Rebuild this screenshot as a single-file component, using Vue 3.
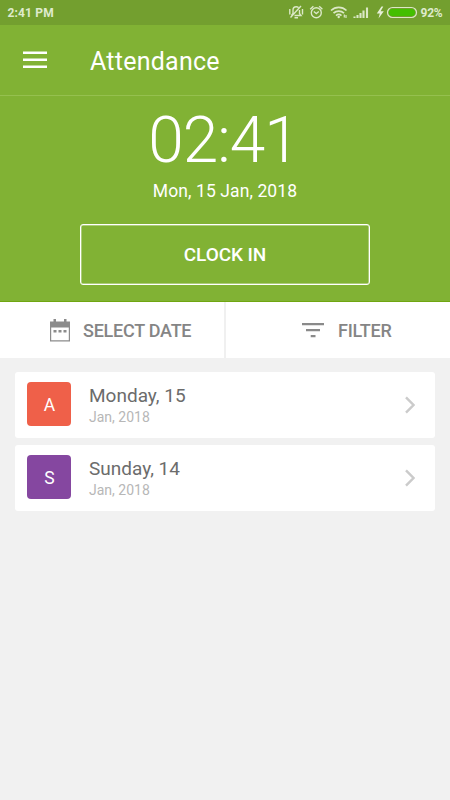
<script setup>
const entries = [
  { letter: 'A', day: 'Monday, 15', month: 'Jan, 2018', tone: 'coral' },
  { letter: 'S', day: 'Sunday, 14', month: 'Jan, 2018', tone: 'purple' },
]
</script>

<template>
  <div class="screen">
    <div class="status">
      <span class="status-time">2:41 PM</span>
      <svg class="status-icons" width="139" height="25" viewBox="0 0 139 25" fill="none" stroke="#dbe8c6" stroke-width="1.4">
        <path d="M3.500 15.500L5 13.500V10c0-2 1.300-3.300 3.200-3.300 1 0 1.700.3 2.300.8M11.500 10v3.500l1.500 2H6.500M6.500 17.800H10M13 6L2.500 17.500M1.800 9v5.500M14.500 9v5.500" />
        <circle cx="28.300" cy="12.800" r="5" />
        <path d="M25.800 11.500l2.500 2 2.500-2M22.200 9.200l3.200-3M34.400 9.200l-3.200-3" />
        <path d="M43 10.500c4.500-4.300 11-4.300 15.500 0M45.500 13.200c3-2.800 7.500-2.800 10.500 0M48 15.700c1.700-1.500 3.800-1.500 5.500 0" stroke-width="1.700" />
        <circle cx="50.700" cy="17" r="1.200" fill="#dbe8c6" stroke="none" />
        <path d="M56.300 14.500v3M58 18v-3" stroke-width="1.200" />
        <path d="M66.500 16.500v1.500M69.500 15v3M72.500 13v5M75.500 10.500v7.500M79 7.500v10.500" stroke-width="2.100" />
        <path d="M93.500 6.500l-4.700 7h3l-1.300 5 5.300-7.200h-3.200l2.700-4.800z" fill="#e7f0d9" stroke="none" />
        <rect x="99.500" y="7.500" width="29" height="10" rx="5" stroke="#dbe8c6" stroke-width="1.200" />
        <rect x="101" y="9" width="26" height="7" rx="3.500" fill="#43bf00" stroke="none" />
      </svg>
      <span class="status-pct">92%</span>
    </div>

    <header class="bar">
      <svg width="24" height="18" viewBox="0 0 24 18" fill="#fff">
        <path d="M0 .500h24v2.500H0zM0 7.500h24V10H0zM0 14.500h24V17H0z" />
      </svg>
      <h1 class="title">Attendance</h1>
    </header>

    <section class="hero">
      <div class="clock">02:41</div>
      <div class="date">Mon, 15 Jan, 2018</div>
      <button class="clock-in"><span>CLOCK IN</span></button>
    </section>

    <nav class="tools">
      <button class="tool select">
        <svg width="20" height="24" viewBox="0 0 20 24">
          <path d="M0 3.500h3.500V1H6v2.500h8V1h2.500v2.500H20v20H0zM1.200 9.500v12.700h17.600V9.500z" fill="#8c8c8c" fill-rule="evenodd" />
          <path d="M3.500 12h3v2.500h-3zM8.500 12h3v2.500h-3zM13.500 12h3v2.500h-3z" fill="#8c8c8c" />
        </svg>
        <span>SELECT DATE</span>
      </button>
      <button class="tool filter">
        <svg width="22" height="16" viewBox="0 0 22 16" fill="#8a8a8a">
          <path d="M0 1h22v2.300H0zM4 7h14v2.300H4zM8.700 13h4.800v2.300H8.700z" />
        </svg>
        <span>FILTER</span>
      </button>
    </nav>

    <main class="list">
      <article v-for="e in entries" :key="e.day" class="card">
        <div class="badge" :class="e.tone"><span>{{ e.letter }}</span></div>
        <div class="info">
          <div class="day">{{ e.day }}</div>
          <div class="month">{{ e.month }}</div>
        </div>
        <svg width="10" height="18" viewBox="0 0 10 18" fill="none" stroke="#cbcbcb" stroke-width="2.400">
          <path d="M1 1.300L8.500 9 1 16.700" />
        </svg>
      </article>
    </main>
  </div>
</template>

<style>
body {
  margin: 0;
  background: #f1f1f1;
}
</style>

<style scoped>
.screen {
  width: 450px;
  height: 800px;
  overflow: hidden;
  background: #f1f1f1;
  font-family: Roboto, "Liberation Sans", sans-serif;
}
button {
  font: inherit;
  margin: 0;
  padding: 0;
  border: 0;
  background: none;
}
svg {
  flex: none;
  display: block;
}
.status {
  display: flex;
  align-items: center;
  height: 25px;
  background: #739f2f;
  color: #dfebcd;
  font-size: 12px;
  font-weight: 700;
  line-height: 25px;
}
.status-time {
  flex: 1;
  padding: 1px 0 0 7.5px;
  letter-spacing: 0.15px;
}
.status-icons {
  margin-right: -6px;
}
.status-pct {
  width: 29.5px;
  padding-top: 1px;
  letter-spacing: -0.2px;
}
.bar {
  display: flex;
  align-items: center;
  box-sizing: border-box;
  height: 71px;
  padding-left: 23px;
  gap: 43px;
  background: #81b234;
  border-bottom: 1px solid #95c04f;
}
.title {
  margin: 3px 0 0;
  color: #fff;
  font-size: 25px;
  font-weight: 400;
  letter-spacing: 0.25px;
}
.hero {
  box-sizing: border-box;
  height: 206px;
  display: flex;
  flex-direction: column;
  align-items: center;
  background: #81b234;
  border-bottom: 1px solid #70a611;
  color: #fff;
}
.clock {
  height: 84px;
  margin-left: -3px;
  line-height: 89px;
  font-size: 64px;
  font-weight: 300;
  letter-spacing: -1px;
}
.date {
  height: 44px;
  line-height: 22px;
  font-size: 17.5px;
  letter-spacing: 0.1px;
}
.clock-in {
  box-sizing: border-box;
  width: 290px;
  height: 61px;
  border: 1px solid #fff;
  box-shadow: inset 0 0 0 0.5px #ffffffb0;
  border-radius: 3px;
  color: #fff;
  font-size: 19px;
  font-weight: 500;
  letter-spacing: -0.1px;
}
.tools {
  display: grid;
  grid-template-columns: 226px 1fr;
  height: 56px;
  background: #fff;
}
.tool {
  box-sizing: border-box;
  display: flex;
  align-items: center;
  color: #858585;
  font-size: 18px;
  font-weight: 500;
  letter-spacing: -0.25px;
}
.select {
  padding-left: 50px;
  gap: 13px;
  border-right: 2px solid #f0f0f0;
}
.filter {
  padding-left: 76px;
  gap: 14px;
}
.list {
  display: flex;
  flex-direction: column;
  gap: 7px;
  padding: 14px 15px;
}
.card {
  box-sizing: border-box;
  display: flex;
  align-items: center;
  height: 66px;
  padding: 0 20px 0 12px;
  border-radius: 3px;
  background: #fff;
}
.badge {
  box-sizing: border-box;
  display: flex;
  align-items: center;
  justify-content: center;
  width: 44px;
  height: 44px;
  margin-top: -2px;
  padding: 2px 0 0 1px;
  border-radius: 4px;
  color: #fff;
  font-size: 17.5px;
}
.coral {
  background: #ef6049;
}
.purple {
  background: #8547a0;
}
.info {
  flex: 1;
  padding-left: 18px;
}
.day {
  color: #6c6c6c;
  font-size: 19px;
  line-height: 24px;
}
.month {
  color: #b7b7b7;
  font-size: 14px;
  line-height: 19px;
}
</style>
